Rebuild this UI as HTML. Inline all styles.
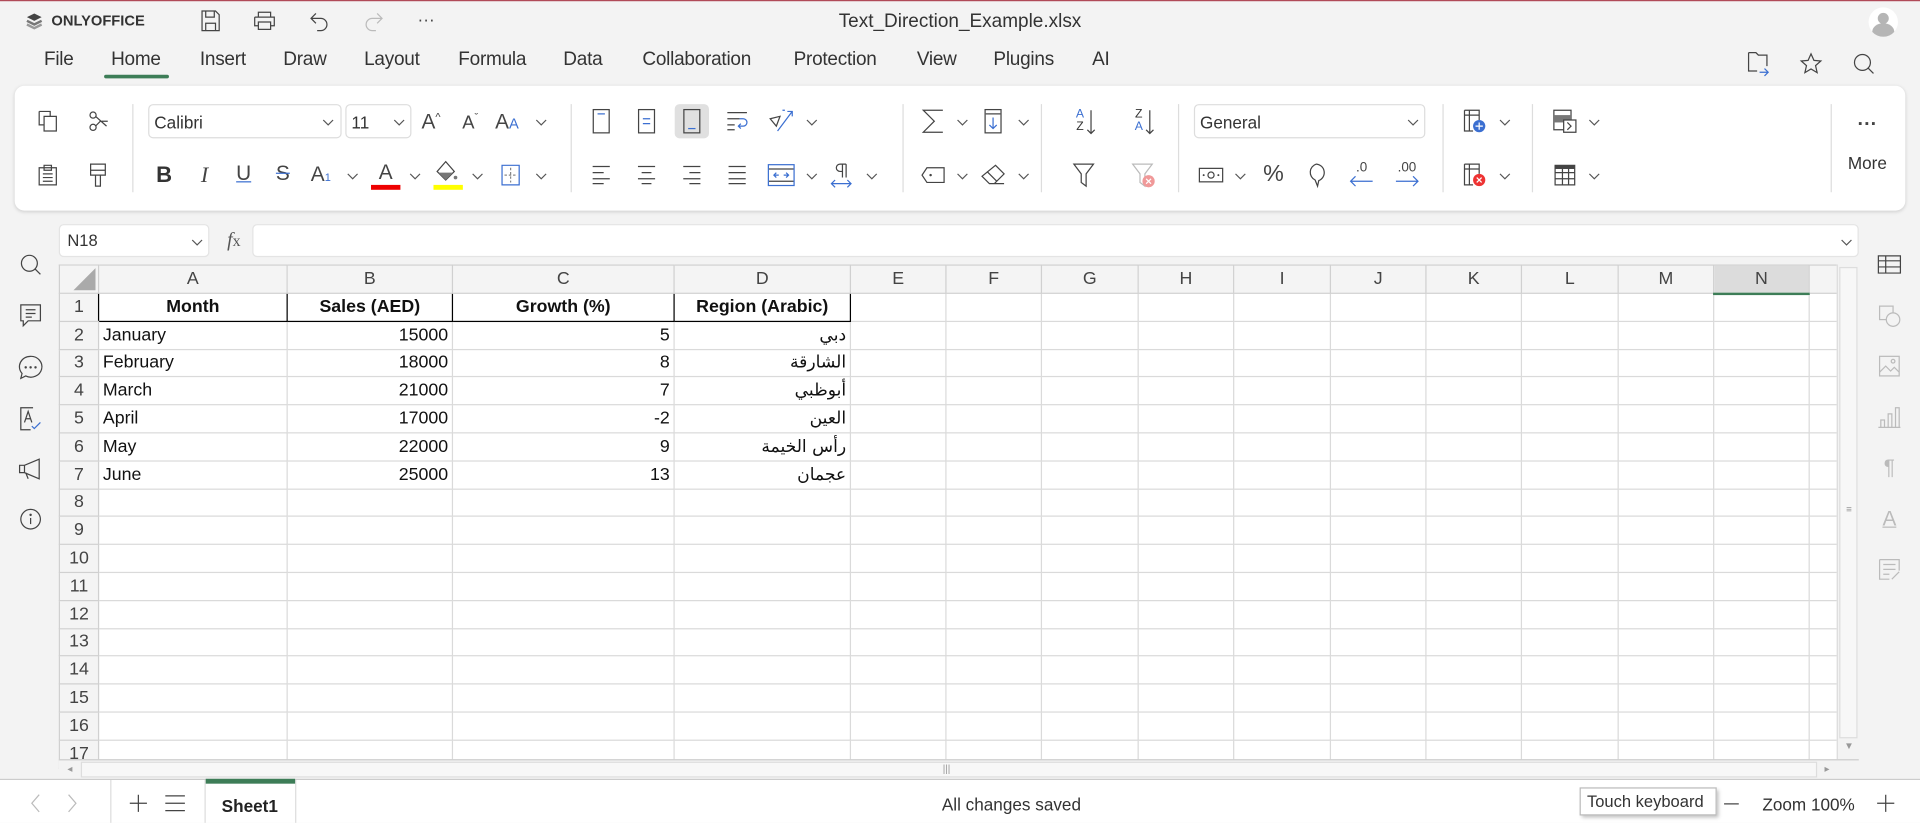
<!DOCTYPE html>
<html><head><meta charset="utf-8">
<style>
*{box-sizing:border-box;margin:0;padding:0}
html,body{width:1920px;height:823px;overflow:hidden;background:#f3f3f3}
#w{position:absolute;left:0;top:0;width:1568px;height:672px;transform:scale(1.22449);transform-origin:0 0;font-family:"Liberation Sans",sans-serif;color:#333;background:#f3f3f3}
.a{position:absolute}
.c{position:absolute;transform:translate(-50%,-50%)}
.mn{position:absolute;top:49px;transform:translate(-50%,-50%);font-size:15.5px;color:#333;letter-spacing:-0.2px}
svg{overflow:visible}
.ic{position:absolute;transform:translate(-50%,-50%)}
.sep{position:absolute;width:1px;background:#ddd;top:85px;height:72px}
.chev{position:absolute;transform:translate(-50%,-50%);width:10px;height:6px}
table{border-collapse:collapse;table-layout:fixed;position:absolute;left:48px;top:216px;background:#fff;font-size:14.5px;color:#111}
td{border:1px solid #dadada;height:22.8px;padding:0 3px;white-space:nowrap;overflow:hidden}
tr.h td{background:#f4f4f4;text-align:center;color:#444;height:23px;border-color:#d0d0d0}
td.r{background:#f4f4f4;text-align:center;color:#444;border-color:#d0d0d0;padding:0}
.b{font-weight:bold;text-align:center}
.n{text-align:right}
.ar{text-align:right;font-family:"DejaVu Sans",sans-serif;font-size:14px}
.bl{border-right:1px solid #000}
.bb{border-bottom:1px solid #000}
</style></head><body><div id="w">
<div class="a" style="left:0;top:0;width:1568px;height:1px;background:#b04a58"></div>
<svg class="ic" style="left:28px;top:17px" width="14" height="14" viewBox="0 0 14 14"><path d="M7 1 13 4 7 7 1 4Z" fill="#444"/><path d="M1 7 7 10 13 7" stroke="#777" stroke-width="2" fill="none"/><path d="M1 10 7 13 13 10" stroke="#999" stroke-width="2" fill="none"/></svg>
<div class="a" style="left:42px;top:10px;font-size:12px;font-weight:bold;color:#333">ONLYOFFICE</div>
<svg class="ic" style="left:172px;top:17px" width="16" height="18"><path d="M1 1h11l3 3v13H1Z M4 1v5h7V1 M4 17v-6h8v6" stroke="#444" fill="none"/></svg>
<svg class="ic" style="left:216px;top:17px" width="18" height="16"><path d="M4 5V1h10v4 M1 5h16v7h-3 M4 12H1V5 M4 9h10v6H4Z" stroke="#444" fill="none"/></svg>
<svg class="ic" style="left:261px;top:17px" width="16" height="16"><path d="M5 2 1 6l4 4 M1 6h8a5 5 0 0 1 0 10H6" stroke="#444" fill="none"/></svg>
<svg class="ic" style="left:305px;top:17px" width="16" height="16"><path d="M11 2l4 4-4 4 M15 6H7a5 5 0 0 0 0 10h3" stroke="#bbb" fill="none"/></svg>
<div class="c" style="left:348px;top:16px;font-size:14px;color:#444">···</div>
<div class="c" style="left:784px;top:18px;font-size:15.5px;color:#333">Text_Direction_Example.xlsx</div>
<svg class="ic" style="left:1538px;top:18px" width="24" height="24"><circle cx="12" cy="12" r="12" fill="#fff"/><circle cx="12" cy="9" r="4.5" fill="#b5b5b5"/><path d="M3 20a9 7 0 0 1 18 0 12 12 0 0 1-18 0Z" fill="#b5b5b5"/></svg>
<div class="mn" style="left:48px">File</div><div class="mn" style="left:111px">Home</div>
<div class="a" style="left:85px;top:61px;width:53px;height:3px;border-radius:2px;background:#3d7d57"></div>
<div class="mn" style="left:182px">Insert</div><div class="mn" style="left:249px">Draw</div><div class="mn" style="left:320px">Layout</div><div class="mn" style="left:402px">Formula</div><div class="mn" style="left:476px">Data</div><div class="mn" style="left:569px">Collaboration</div><div class="mn" style="left:682px">Protection</div><div class="mn" style="left:765px">View</div><div class="mn" style="left:836px">Plugins</div><div class="mn" style="left:899px">AI</div>
<svg class="ic" style="left:1436px;top:52px" width="18" height="20"><path d="M1 1h6l2 2h7v9 M1 1v15h7" stroke="#444" fill="none"/><path d="M10 17h7m-3-3 3 3-3 3" stroke="#3b6fd1" fill="none"/></svg>
<svg class="ic" style="left:1479px;top:52px" width="18" height="18"><path d="M9 1l2.4 5.3 5.6.5-4.3 3.8 1.3 5.7L9 13.3 4 16.3l1.3-5.7L1 6.8l5.6-.5Z" stroke="#444" fill="none"/></svg>
<svg class="ic" style="left:1522px;top:52px" width="18" height="18"><circle cx="8" cy="8" r="6.5" stroke="#444" fill="none"/><path d="M12.5 12.5 17 17" stroke="#444"/></svg>
<div class="a" style="left:12px;top:70px;width:1544px;height:102px;background:#fff;border-radius:8px;box-shadow:0 1px 3px rgba(0,0,0,.15)"></div>
<svg class="ic" style="left:39px;top:99px" width="16" height="18"><path d="M1 1h9v4 M1 1v11h4 M5 5h10v12H5Z" stroke="#444" fill="none"/></svg>
<svg class="ic" style="left:80px;top:99px" width="16" height="18"><circle cx="4" cy="4" r="2.5" stroke="#444" fill="none"/><circle cx="4" cy="14" r="2.5" stroke="#444" fill="none"/><path d="M6 5l9 8 M6 13l4-4 M11 9h5" stroke="#444"/></svg>
<svg class="ic" style="left:39px;top:143px" width="16" height="18"><path d="M1 3h14v14H1Z M5 1h6v4H5Z M4 8h8M4 11h8M4 14h8" stroke="#444" fill="none"/></svg>
<svg class="ic" style="left:80px;top:143px" width="14" height="20"><path d="M1 1h12v9H1Z M1 6h12 M5 10v9h4v-9" stroke="#444" fill="none"/></svg>
<div class="sep" style="left:108px"></div>
<div class="a" style="left:121px;top:85px;width:158px;height:28px;border:1px solid #ddd;border-radius:4px;font-size:14px;padding:6px 4px;color:#333">Calibri</div>
<svg class="chev" style="left:268px;top:100px"><path d="M1 1l4 4 4-4" stroke="#555" fill="none"/></svg>
<div class="a" style="left:282px;top:85px;width:54px;height:28px;border:1px solid #ddd;border-radius:4px;font-size:14px;padding:6px 4px">11</div>
<svg class="chev" style="left:326px;top:100px"><path d="M1 1l4 4 4-4" stroke="#555" fill="none"/></svg>
<div class="c" style="left:352px;top:100px;font-size:17px;color:#444">A<sup style="font-size:9px">^</sup></div>
<div class="c" style="left:384px;top:100px;font-size:15px;color:#444">A<sup style="font-size:9px">ˇ</sup></div>
<div class="c" style="left:414px;top:100px;font-size:17px;color:#444">A<span style="font-size:12px;color:#3b6fd1">A</span></div>
<svg class="chev" style="left:442px;top:100px"><path d="M1 1l4 4 4-4" stroke="#555" fill="none"/></svg>
<div class="c" style="left:134px;top:143px;font-size:18px;font-weight:bold;color:#333">B</div>
<div class="c" style="left:167px;top:143px;font-size:18px;font-style:italic;font-family:'Liberation Serif',serif;color:#444">I</div>
<div class="c" style="left:199px;top:142px;font-size:17px;color:#444;text-decoration:underline;text-decoration-color:#3b6fd1">U</div>
<div class="c" style="left:231px;top:142px;font-size:17px;color:#444;text-decoration:line-through;text-decoration-color:#3b6fd1">S</div>
<div class="c" style="left:262px;top:143px;font-size:17px;color:#444">A<span style="font-size:9px;color:#3b6fd1">1</span></div>
<svg class="chev" style="left:288px;top:144px"><path d="M1 1l4 4 4-4" stroke="#555" fill="none"/></svg>
<div class="c" style="left:315px;top:141px;font-size:17px;color:#444">A</div>
<div class="a" style="left:303px;top:151px;width:24px;height:4px;background:#e00"></div>
<svg class="chev" style="left:339px;top:144px"><path d="M1 1l4 4 4-4" stroke="#555" fill="none"/></svg>
<svg class="ic" style="left:365px;top:140px" width="18" height="18"><path d="M8 1 15 9 8 16 1 9Z" stroke="#444" fill="none"/><path d="M2 10h12l-6 6Z" fill="#777"/><circle cx="16" cy="14" r="1.5" fill="#777"/></svg>
<div class="a" style="left:354px;top:151px;width:24px;height:4px;background:#ff0"></div>
<svg class="chev" style="left:390px;top:144px"><path d="M1 1l4 4 4-4" stroke="#555" fill="none"/></svg>
<svg class="ic" style="left:417px;top:143px" width="16" height="18"><path d="M1 1h14v16H1Z" stroke="#3b6fd1" fill="none"/><path d="M8 3v12 M3 9h10" stroke="#888" stroke-dasharray="2 1.5"/></svg>
<svg class="chev" style="left:442px;top:144px"><path d="M1 1l4 4 4-4" stroke="#555" fill="none"/></svg>
<div class="sep" style="left:466px"></div>
<div class="a" style="left:551px;top:85px;width:28px;height:28px;background:#e0e0e0;border-radius:4px"></div>
<svg class="ic" style="left:491px;top:99px" width="14" height="20"><rect x=".5" y=".5" width="13" height="19" stroke="#444" fill="none"/><path d="M4 4h6" stroke="#3b6fd1"/></svg>
<svg class="ic" style="left:528px;top:99px" width="14" height="20"><rect x=".5" y=".5" width="13" height="19" stroke="#444" fill="none"/><path d="M4 8h6M4 12h6" stroke="#3b6fd1"/></svg>
<svg class="ic" style="left:565px;top:99px" width="14" height="20"><rect x=".5" y=".5" width="13" height="19" stroke="#444" fill="none"/><path d="M4 16h6" stroke="#3b6fd1"/></svg>
<svg class="ic" style="left:602px;top:99px" width="18" height="16"><path d="M1 1h16M1 6h10M1 11h6M1 15h6" stroke="#444"/><path d="M11 6h3a3 3 0 0 1 0 6h-4m2-2-2 2 2 2" stroke="#3b6fd1" fill="none"/></svg>
<svg class="ic" style="left:638px;top:99px" width="22" height="20"><path d="M2 8l8-2-3 8Z" stroke="#444" fill="none"/><path d="M8 18 20 2m-4 0h4v4 M12 1l2 0" stroke="#3b6fd1" fill="none"/></svg>
<svg class="chev" style="left:663px;top:100px"><path d="M1 1l4 4 4-4" stroke="#555" fill="none"/></svg>
<svg class="ic" style="left:491px;top:143px" width="16" height="16"><path d="M1 1h14M1 6h9M1 11h14M1 15h9" stroke="#444"/></svg>
<svg class="ic" style="left:528px;top:143px" width="16" height="16"><path d="M1 1h14M4 6h8M1 11h14M4 15h8" stroke="#444"/></svg>
<svg class="ic" style="left:565px;top:143px" width="16" height="16"><path d="M1 1h14M6 6h9M1 11h14M6 15h9" stroke="#444"/></svg>
<svg class="ic" style="left:602px;top:143px" width="16" height="16"><path d="M1 1h14M1 6h14M1 11h14M1 15h14" stroke="#444"/></svg>
<svg class="ic" style="left:638px;top:143px" width="22" height="18"><rect x=".5" y=".5" width="21" height="17" stroke="#3b6fd1" fill="none"/><path d="M1 4h20M1 14h20" stroke="#444"/><path d="M5 9h4M13 9h4M7 7 5 9l2 2M15 7l2 2-2 2" stroke="#3b6fd1" fill="none"/></svg>
<svg class="chev" style="left:663px;top:144px"><path d="M1 1l4 4 4-4" stroke="#555" fill="none"/></svg>
<svg class="ic" style="left:687px;top:143px" width="18" height="20"><path d="M10 1v11M13 1v11M13 1H8a3 3 0 0 0 0 6h2" stroke="#444" fill="none"/><path d="M1 17h16M4 14l-3 3 3 3M14 14l3 3-3 3" stroke="#3b6fd1" fill="none"/></svg>
<svg class="chev" style="left:712px;top:144px"><path d="M1 1l4 4 4-4" stroke="#555" fill="none"/></svg>
<div class="sep" style="left:737px"></div>
<svg class="ic" style="left:762px;top:99px" width="18" height="20"><path d="M17 1H1l9 9-9 9h16" stroke="#444" fill="none"/></svg>
<svg class="chev" style="left:786px;top:100px"><path d="M1 1l4 4 4-4" stroke="#555" fill="none"/></svg>
<svg class="ic" style="left:811px;top:99px" width="14" height="20"><rect x=".5" y=".5" width="13" height="19" stroke="#444" fill="none"/><path d="M1 4h12" stroke="#444"/><path d="M7 7v9M4 13l3 3 3-3" stroke="#3b6fd1" fill="none"/></svg>
<svg class="chev" style="left:836px;top:100px"><path d="M1 1l4 4 4-4" stroke="#555" fill="none"/></svg>
<svg class="ic" style="left:762px;top:143px" width="20" height="14"><path d="M5 1h14v12H5L1 7Z" stroke="#444" fill="none"/><circle cx="8" cy="7" r="1" fill="#444"/></svg>
<svg class="chev" style="left:786px;top:144px"><path d="M1 1l4 4 4-4" stroke="#555" fill="none"/></svg>
<svg class="ic" style="left:811px;top:143px" width="20" height="18"><path d="M12 1l7 7-8 8H7L1 10Z M5 6l8 8 M7 16h12" stroke="#444" fill="none"/></svg>
<svg class="chev" style="left:836px;top:144px"><path d="M1 1l4 4 4-4" stroke="#555" fill="none"/></svg>
<div class="sep" style="left:850px"></div>
<div class="c" style="left:882px;top:99px;font-size:10px;line-height:10px;text-align:center"><span style="color:#3b6fd1">A</span><br>Z</div>
<svg class="ic" style="left:891px;top:100px" width="6" height="20"><path d="M3 0v19M0 16l3 3 3-3" stroke="#444" fill="none"/></svg>
<div class="c" style="left:930px;top:99px;font-size:10px;line-height:10px;text-align:center">Z<br><span style="color:#3b6fd1">A</span></div>
<svg class="ic" style="left:939px;top:100px" width="6" height="20"><path d="M3 0v19M0 16l3 3 3-3" stroke="#444" fill="none"/></svg>
<svg class="ic" style="left:885px;top:143px" width="18" height="20"><path d="M1 1h16l-6 8v10l-4-3V9Z" stroke="#444" fill="none"/></svg>
<svg class="ic" style="left:933px;top:143px" width="18" height="20"><path d="M1 1h16l-6 8v10l-4-3V9Z" stroke="#bbb" fill="none"/><circle cx="14" cy="15" r="5" fill="#f09999"/><path d="M12 13l4 4M16 13l-4 4" stroke="#fff"/></svg>
<div class="sep" style="left:962px"></div>
<div class="a" style="left:975px;top:85px;width:189px;height:28px;border:1px solid #ddd;border-radius:4px;font-size:14px;padding:6px 4px">General</div>
<svg class="chev" style="left:1154px;top:100px"><path d="M1 1l4 4 4-4" stroke="#555" fill="none"/></svg>
<svg class="ic" style="left:989px;top:143px" width="20" height="12"><rect x=".5" y=".5" width="19" height="11" stroke="#444" fill="none"/><circle cx="10" cy="6" r="2.5" stroke="#444" fill="none"/><circle cx="4" cy="6" r=".8" fill="#444"/><circle cx="16" cy="6" r=".8" fill="#444"/></svg>
<svg class="chev" style="left:1013px;top:144px"><path d="M1 1l4 4 4-4" stroke="#555" fill="none"/></svg>
<div class="c" style="left:1040px;top:143px;font-size:19px;color:#444">%</div>
<svg class="ic" style="left:1075px;top:143px" width="16" height="20"><path d="M8 1a7 7 0 0 1 2 13.5L9 19 7 14A7 7 0 0 1 8 1Z" stroke="#444" fill="none"/></svg>
<div class="c" style="left:1112px;top:137px;font-size:11px;color:#444">.0</div>
<svg class="ic" style="left:1112px;top:148px" width="20" height="8"><path d="M1 4h18M5 0 1 4l4 4" stroke="#3b6fd1" fill="none"/></svg>
<div class="c" style="left:1149px;top:137px;font-size:11px;color:#444">.00</div>
<svg class="ic" style="left:1149px;top:148px" width="20" height="8"><path d="M1 4h18M15 0l4 4-4 4" stroke="#3b6fd1" fill="none"/></svg>
<div class="sep" style="left:1178px"></div>
<svg class="ic" style="left:1204px;top:99px" width="18" height="20"><path d="M1 1h12v8 M1 1v17h7 M1 5h12 M5 1v17" stroke="#444" fill="none"/><circle cx="13" cy="14" r="5" fill="#3b6fd1"/><path d="M13 11v6M10 14h6" stroke="#fff"/></svg>
<svg class="chev" style="left:1229px;top:100px"><path d="M1 1l4 4 4-4" stroke="#555" fill="none"/></svg>
<svg class="ic" style="left:1204px;top:143px" width="18" height="20"><path d="M1 1h12v8 M1 1v17h7 M1 5h12 M5 1v17" stroke="#444" fill="none"/><circle cx="13" cy="14" r="5" fill="#e33"/><path d="M11 12l4 4M15 12l-4 4" stroke="#fff"/></svg>
<svg class="chev" style="left:1229px;top:144px"><path d="M1 1l4 4 4-4" stroke="#555" fill="none"/></svg>
<div class="sep" style="left:1251px"></div>
<svg class="ic" style="left:1278px;top:99px" width="20" height="20"><path d="M1 1h14v16H1Z" stroke="#444" fill="none"/><rect x="1" y="5" width="14" height="6" fill="#777"/><path d="M9 9h10v10H9Z" stroke="#444" fill="#fff"/><path d="M12 11l3 3-3 3" stroke="#444" fill="none"/></svg>
<svg class="chev" style="left:1302px;top:100px"><path d="M1 1l4 4 4-4" stroke="#555" fill="none"/></svg>
<svg class="ic" style="left:1278px;top:143px" width="18" height="18"><path d="M1 1h16v16H1Z M1 7h16M1 12h16M7 1v16M12 1v16" stroke="#444" fill="none"/><rect x="1" y="1" width="16" height="3" fill="#444"/></svg>
<svg class="chev" style="left:1302px;top:144px"><path d="M1 1l4 4 4-4" stroke="#555" fill="none"/></svg>
<div class="sep" style="left:1495px"></div>
<div class="c" style="left:1525px;top:102px;font-size:16px;font-weight:bold;color:#444">···</div>
<div class="c" style="left:1525px;top:133px;font-size:14px;color:#333">More</div>
<div class="a" style="left:48px;top:183px;width:123px;height:27px;background:#fff;border:1px solid #e4e4e4;border-radius:4px;font-size:13.5px;padding:5px 6px">N18</div>
<svg class="chev" style="left:161px;top:198px"><path d="M1 1l4 4 4-4" stroke="#555" fill="none"/></svg>
<div class="c" style="left:191px;top:197px;font-size:16px;font-style:italic;font-family:'Liberation Serif',serif;color:#555">f<span style="font-style:normal;font-size:13px">x</span></div>
<div class="a" style="left:206px;top:183px;width:1312px;height:27px;background:#fff;border:1px solid #e4e4e4;border-radius:4px"></div>
<svg class="chev" style="left:1508px;top:198px"><path d="M1 1l4 4 4-4" stroke="#555" fill="none"/></svg>
<svg class="ic" style="left:25px;top:216px" width="18" height="18"><circle cx="8" cy="8" r="6.5" stroke="#444" fill="none"/><path d="M12.5 12.5 17 17" stroke="#444"/></svg>
<svg class="ic" style="left:25px;top:258px" width="18" height="20"><path d="M1 1h16v13H7l-4 4v-4H1Z M5 5h8M5 8h8M5 11h5" stroke="#444" fill="none"/></svg>
<svg class="ic" style="left:25px;top:300px" width="20" height="20"><path d="M10 1a9 8.5 0 1 1-4 16L2 19l1-4A9 8.5 0 0 1 10 1Z" stroke="#444" fill="none"/><circle cx="6" cy="10" r="1" fill="#444"/><circle cx="10" cy="10" r="1" fill="#444"/><circle cx="14" cy="10" r="1" fill="#444"/></svg>
<svg class="ic" style="left:25px;top:342px" width="18" height="20"><path d="M11 1H1v18h8" stroke="#444" fill="none"/><path d="M4 13l3-9 3 9M5 10h4" stroke="#444" fill="none"/><path d="M10 16l2 2 5-5" stroke="#3b6fd1" fill="none"/></svg>
<svg class="ic" style="left:25px;top:383px" width="20" height="18"><path d="M1 6h4l12-5v16L5 12H1Z M5 6v6 M6 12l2 5" stroke="#444" fill="none"/></svg>
<svg class="ic" style="left:25px;top:424px" width="18" height="18"><circle cx="9" cy="9" r="8" stroke="#444" fill="none"/><path d="M9 8v5" stroke="#444"/><circle cx="9" cy="5.5" r="1" fill="#444"/></svg>
<svg class="ic" style="left:1543px;top:216px" width="20" height="16"><path d="M1 1h18v14H1Z M1 5h18M1 10h18M7 1v14" stroke="#444" fill="none"/></svg>
<svg class="ic" style="left:1543px;top:258px" width="18" height="18"><rect x="1" y="1" width="11" height="11" stroke="#bbb" fill="none"/><circle cx="12" cy="12" r="5.5" stroke="#bbb" fill="#f3f3f3"/></svg>
<svg class="ic" style="left:1543px;top:299px" width="18" height="18"><rect x="1" y="1" width="16" height="16" stroke="#bbb" fill="none"/><path d="M1 14l5-5 4 4 3-3 4 4" stroke="#bbb" fill="none"/><circle cx="12" cy="5" r="1.5" stroke="#bbb" fill="none"/></svg>
<svg class="ic" style="left:1543px;top:341px" width="18" height="18"><path d="M2 17V11h3v6 M8 17V6h3v11 M14 17V1h3v16 M0 17h18" stroke="#bbb" fill="none"/></svg>
<div class="c" style="left:1543px;top:382px;font-size:17px;color:#bbb">¶</div>
<div class="c" style="left:1543px;top:424px;font-size:17px;color:#bbb;text-decoration:underline">A</div>
<svg class="ic" style="left:1543px;top:465px" width="18" height="18"><path d="M1 1h16v9M1 1v16h8 M4 5h10M4 9h10M4 13h5" stroke="#bbb" fill="none"/><path d="M11 17l6-6" stroke="#bbb"/></svg>
<table>
<colgroup><col style="width:32px"><col style="width:154px"><col style="width:135px"><col style="width:181px"><col style="width:144px"><col style="width:78px"><col style="width:78px"><col style="width:79px"><col style="width:78px"><col style="width:79px"><col style="width:78px"><col style="width:78px"><col style="width:79px"><col style="width:78px"><col style="width:78px"><col style="width:23px"></colgroup>
<tr class="h"><td style="position:relative"><svg style="position:absolute;right:2px;bottom:2px" width="18" height="18"><path d="M18 0V18H0Z" fill="#aaa"/></svg></td><td>A</td><td>B</td><td>C</td><td>D</td><td>E</td><td>F</td><td>G</td><td>H</td><td>I</td><td>J</td><td>K</td><td>L</td><td>M</td><td style="background:#dcdcdc;border-bottom:2px solid #3d7d57">N</td><td></td></tr>
<tr><td class="r" style="border-right:1px solid #000">1</td><td class="b bb bl">Month</td><td class="b bb bl">Sales (AED)</td><td class="b bb bl">Growth (%)</td><td class="b bb bl">Region (Arabic)</td><td></td><td></td><td></td><td></td><td></td><td></td><td></td><td></td><td></td><td></td><td></td></tr>
<tr><td class="r">2</td><td>January</td><td class="n">15000</td><td class="n">5</td><td class="ar">دبي</td><td></td><td></td><td></td><td></td><td></td><td></td><td></td><td></td><td></td><td></td><td></td></tr>
<tr><td class="r">3</td><td>February</td><td class="n">18000</td><td class="n">8</td><td class="ar">الشارقة</td><td></td><td></td><td></td><td></td><td></td><td></td><td></td><td></td><td></td><td></td><td></td></tr>
<tr><td class="r">4</td><td>March</td><td class="n">21000</td><td class="n">7</td><td class="ar">أبوظبي</td><td></td><td></td><td></td><td></td><td></td><td></td><td></td><td></td><td></td><td></td><td></td></tr>
<tr><td class="r">5</td><td>April</td><td class="n">17000</td><td class="n">-2</td><td class="ar">العين</td><td></td><td></td><td></td><td></td><td></td><td></td><td></td><td></td><td></td><td></td><td></td></tr>
<tr><td class="r">6</td><td>May</td><td class="n">22000</td><td class="n">9</td><td class="ar">رأس الخيمة</td><td></td><td></td><td></td><td></td><td></td><td></td><td></td><td></td><td></td><td></td><td></td></tr>
<tr><td class="r">7</td><td>June</td><td class="n">25000</td><td class="n">13</td><td class="ar">عجمان</td><td></td><td></td><td></td><td></td><td></td><td></td><td></td><td></td><td></td><td></td><td></td></tr>
<tr><td class="r">8</td><td></td><td></td><td></td><td></td><td></td><td></td><td></td><td></td><td></td><td></td><td></td><td></td><td></td><td></td><td></td></tr>
<tr><td class="r">9</td><td></td><td></td><td></td><td></td><td></td><td></td><td></td><td></td><td></td><td></td><td></td><td></td><td></td><td></td><td></td></tr>
<tr><td class="r">10</td><td></td><td></td><td></td><td></td><td></td><td></td><td></td><td></td><td></td><td></td><td></td><td></td><td></td><td></td><td></td></tr>
<tr><td class="r">11</td><td></td><td></td><td></td><td></td><td></td><td></td><td></td><td></td><td></td><td></td><td></td><td></td><td></td><td></td><td></td></tr>
<tr><td class="r">12</td><td></td><td></td><td></td><td></td><td></td><td></td><td></td><td></td><td></td><td></td><td></td><td></td><td></td><td></td><td></td></tr>
<tr><td class="r">13</td><td></td><td></td><td></td><td></td><td></td><td></td><td></td><td></td><td></td><td></td><td></td><td></td><td></td><td></td><td></td></tr>
<tr><td class="r">14</td><td></td><td></td><td></td><td></td><td></td><td></td><td></td><td></td><td></td><td></td><td></td><td></td><td></td><td></td><td></td></tr>
<tr><td class="r">15</td><td></td><td></td><td></td><td></td><td></td><td></td><td></td><td></td><td></td><td></td><td></td><td></td><td></td><td></td><td></td></tr>
<tr><td class="r">16</td><td></td><td></td><td></td><td></td><td></td><td></td><td></td><td></td><td></td><td></td><td></td><td></td><td></td><td></td><td></td></tr>
<tr><td class="r">17</td><td></td><td></td><td></td><td></td><td></td><td></td><td></td><td></td><td></td><td></td><td></td><td></td><td></td><td></td><td></td></tr>
</table>
<div class="a" style="left:1500px;top:216px;width:18px;height:405px;background:#f3f3f3;border-left:1px solid #ddd"></div>
<div class="a" style="left:1502px;top:218px;width:15px;height:385px;background:#f7f7f7;border:1px solid #ddd"></div>
<div class="c" style="left:1510px;top:416px;font-size:8px;color:#999">≡</div>
<div class="c" style="left:1510px;top:609px;font-size:8px;color:#999">▼</div>
<div class="a" style="left:48px;top:620px;width:1470px;height:16px;background:#f3f3f3;border-top:1px solid #ccc"></div>
<div class="a" style="left:66px;top:622px;width:1418px;height:13px;background:#f7f7f7;border:1px solid #ddd"></div>
<div class="c" style="left:773px;top:628px;font-size:8px;color:#999">|||</div>
<div class="c" style="left:57px;top:628px;font-size:8px;color:#999">◂</div>
<div class="c" style="left:1492px;top:628px;font-size:8px;color:#999">▸</div>
<div class="a" style="left:0;top:636px;width:1568px;height:36px;background:#fff;border-top:1px solid #ccc"></div>
<svg class="ic" style="left:29px;top:656px" width="8" height="16"><path d="M7 1 1 8l6 7" stroke="#bbb" fill="none"/></svg>
<svg class="ic" style="left:59px;top:656px" width="8" height="16"><path d="M1 1l6 7-6 7" stroke="#bbb" fill="none"/></svg>
<div class="a" style="left:90px;top:637px;width:1px;height:35px;background:#ddd"></div>
<svg class="ic" style="left:113px;top:656px" width="14" height="14"><path d="M7 0v14M0 7h14" stroke="#444"/></svg>
<svg class="ic" style="left:143px;top:656px" width="16" height="14"><path d="M0 1h16M0 7h16M0 13h16" stroke="#444"/></svg>
<div class="a" style="left:167px;top:637px;width:75px;height:35px;border-left:1px solid #ddd;border-right:1px solid #ddd"></div>
<div class="a" style="left:168px;top:636px;width:73px;height:4px;background:#3d7d57"></div>
<div class="c" style="left:204px;top:658px;font-size:14px;font-weight:bold;color:#222">Sheet1</div>
<div class="c" style="left:826px;top:657px;font-size:14px;color:#333">All changes saved</div>
<div class="a" style="left:1290px;top:643px;width:112px;height:23px;background:#fff;border:1px solid #bbb;box-shadow:2px 2px 3px rgba(0,0,0,.25);font-size:13.5px;padding:3px 5px;color:#333">Touch keyboard</div>
<div class="a" style="left:1408px;top:656px;width:12px;height:1px;background:#444"></div>
<div class="c" style="left:1477px;top:657px;font-size:14px;color:#333">Zoom 100%</div>
<svg class="ic" style="left:1540px;top:656px" width="14" height="14"><path d="M7 0v14M0 7h14" stroke="#444"/></svg>
</div></body></html>
